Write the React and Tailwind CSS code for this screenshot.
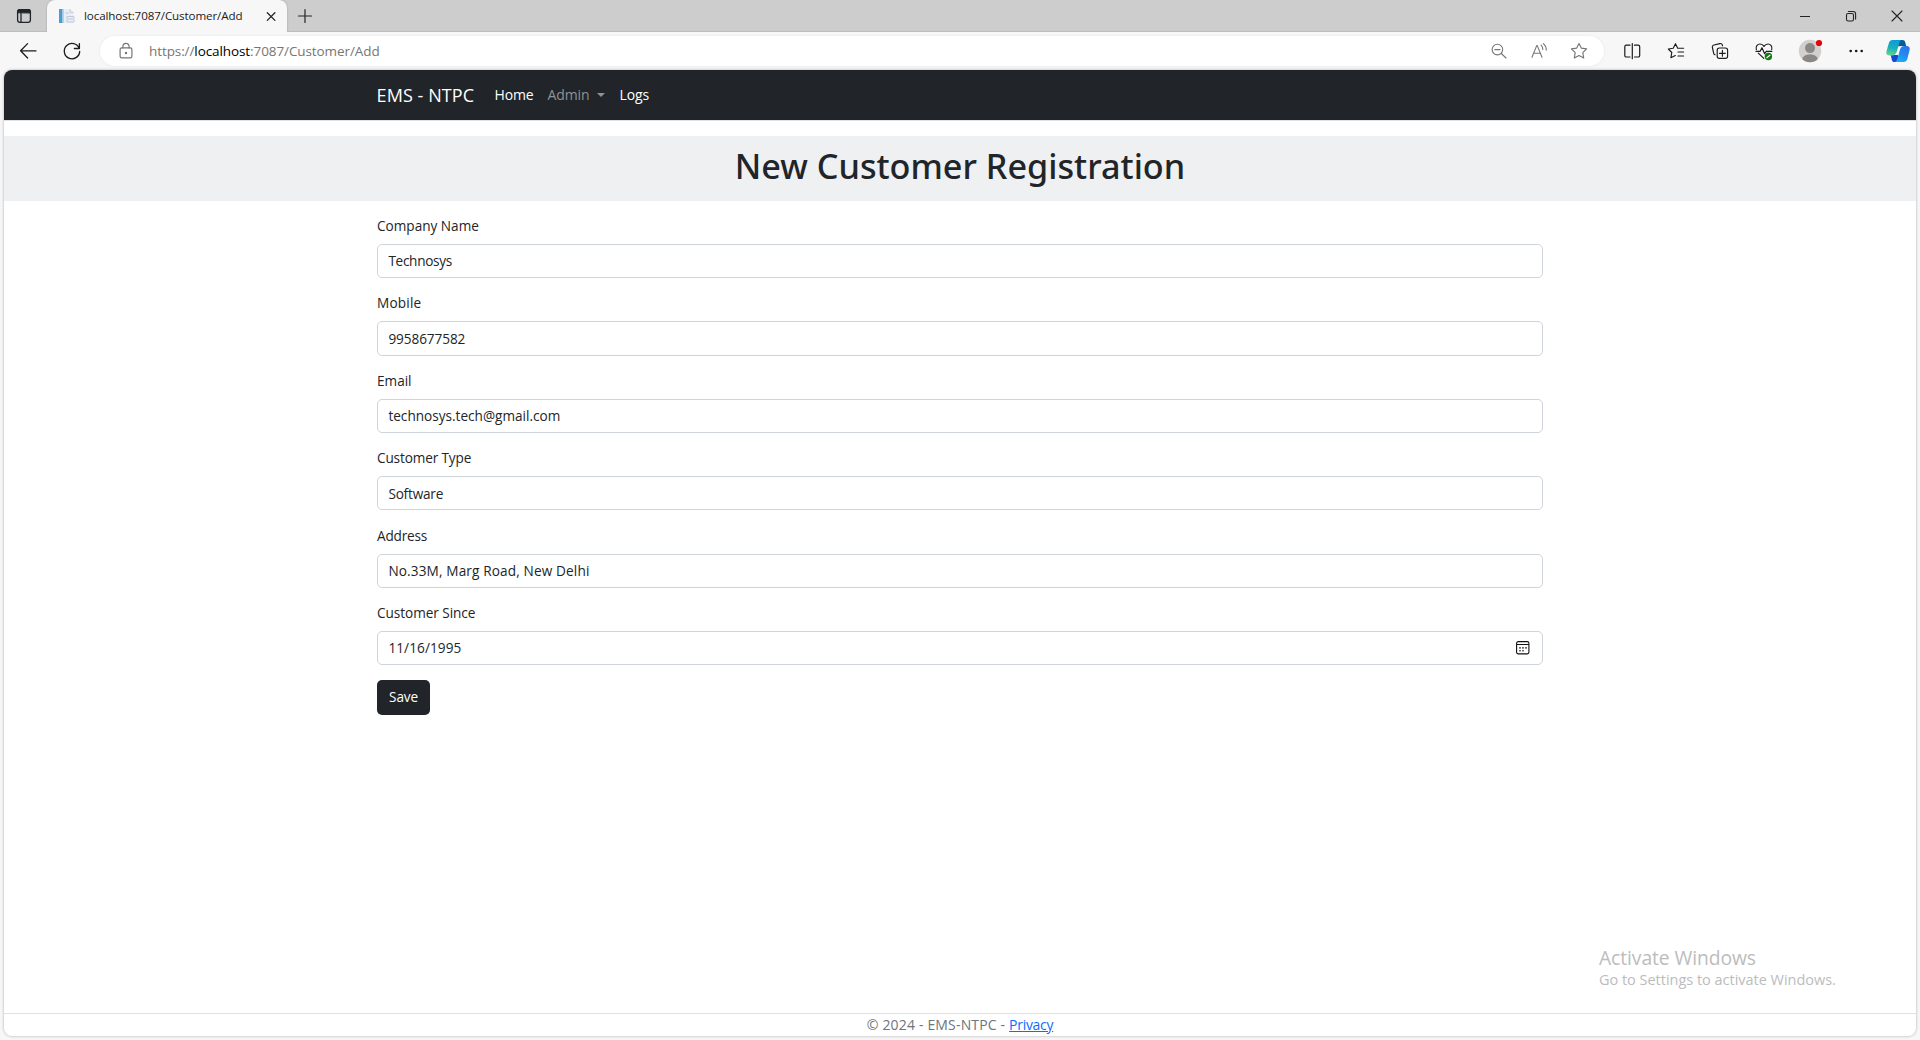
import React from 'react';

function Icon({ children, className = '', width = 1.2, size = 24 }) {
  return (
    <svg
      width={size}
      height={size}
      viewBox="0 0 24 24"
      fill="none"
      stroke="currentColor"
      strokeWidth={width}
      strokeLinecap="round"
      strokeLinejoin="round"
      className={`block shrink-0 ${className}`}
    >
      {children}
    </svg>
  );
}

const STAR = 'M12 4.4 L14.3 9.1 L19.6 9.9 L15.8 13.6 L16.7 19 L12 16.5 L7.3 19 L8.2 13.6 L4.4 9.9 L9.7 9.1 Z';

function TabStrip() {
  return (
    <div className="flex h-8 shrink-0 bg-[#cdcdcd] shadow-[inset_0_-1px_0_#bdbdbd]">
      <div className="flex w-[47px] items-center justify-center pl-[1px]">
        <Icon width={1.3}>
          <rect x="5.6" y="5.6" width="12.8" height="12.8" rx="2.4" />
          <path d="M5.6 8.6V8a2.4 2.4 0 0 1 2.4-2.4h8a2.4 2.4 0 0 1 2.4 2.4v.8z" fill="currentColor" />
          <path d="M9 9v9" />
        </Icon>
      </div>
      <div className="flex w-60 items-center rounded-t-lg bg-[#f7f7f7] shadow-[0_0_2px_rgba(0,0,0,0.25)] [clip-path:inset(0_-3px_0_-3px)]">
        <svg width="16" height="16" viewBox="0 0 16 16" className="ml-3 block shrink-0">
          <rect x="0" y="1" width="3.6" height="14" fill="#4f9bd0" />
          <rect x="3.6" y="1" width="1.4" height="14" fill="#b5d4ea" />
          <path d="M5 1h6.5l3 3v11H5z" fill="#e9edf5" />
          <path d="M11 1v3.4h3.6M6.5 5h3.5M8 8.5h7M8 8.5V14h7V8.5M9 11h5" fill="none" stroke="#bcc5d6" strokeWidth="0.9" />
        </svg>
        <span className="ml-[9px] text-[11.6px] leading-4 tracking-[-0.1px] whitespace-nowrap text-[#1b1b1b]">localhost:7087/Customer/Add</span>
        <Icon className="mr-1 ml-auto" width={1.3}>
          <path d="M8.3 8.8l7.600 7.600M15.900 8.800l-7.600 7.600" />
        </Icon>
      </div>
      <div className="flex w-[35px] items-center justify-center">
        <Icon width={1.2}>
          <path d="M12 5.500v13M5.500 12h13" />
        </Icon>
      </div>
      <div className="ml-auto flex items-center">
        <div className="flex w-[46px] justify-center">
          <Icon><path d="M7 12.5h10" strokeLinecap="butt" strokeWidth="1" /></Icon>
        </div>
        <div className="flex w-[46px] justify-center">
          <Icon width={1.1}>
            <rect x="7.5" y="9.5" width="7" height="7.5" rx="1.6" />
            <path d="M9.4 7.5h4.8a2.4 2.4 0 0 1 2.4 2.4v5.2" />
          </Icon>
        </div>
        <div className="flex w-[46px] justify-center">
          <Icon width={1.1}><path d="M7 7l10 10M17 7L7 17" /></Icon>
        </div>
      </div>
    </div>
  );
}

function CopilotLogo() {
  return (
    <svg width="24" height="24" viewBox="0 0 24 24" className="ml-2 block shrink-0">
      <defs>
        <linearGradient id="copilotLeft" x1="0.5" y1="0" x2="0.3" y2="1">
          <stop offset="0" stopColor="#0c9bd8" />
          <stop offset="0.5" stopColor="#18aebd" />
          <stop offset="1" stopColor="#62d88b" />
        </linearGradient>
        <linearGradient id="copilotRight" x1="0.8" y1="0" x2="0.3" y2="1">
          <stop offset="0" stopColor="#2a74e8" />
          <stop offset="0.5" stopColor="#2389ee" />
          <stop offset="1" stopColor="#16b4f4" />
        </linearGradient>
      </defs>
      <path d="M12 1h4.500c1.500 0 2.300.9 2.700 2.300l1 3.700h-4L12 7.200z" fill="#0a5a94" />
      <path d="M12 23H8.500c-1.500 0-2.200-.8-2.600-2.100L4.700 16h4L12 16z" fill="#1647cf" />
      <path d="M6.500 1h9.200c-1.300.3-1.900 1.300-2.400 3l-2.500 8.500c-.9 2.800-2.300 4-4.500 4H3.500C.9 16.500-.1 14.900.4 12.600L2.900 4C3.500 2 4.600 1 6.500 1z" fill="url(#copilotLeft)" />
      <path d="M17.500 23H8.800c1.400-.4 2-1.400 2.500-3l2.500-8.800c.8-2.800 2.200-4.200 4.600-4.200h2.300c2.500 0 3.500 1.700 2.900 4L21.300 20c-.6 2-1.800 3-3.800 3z" fill="url(#copilotRight)" />
    </svg>
  );
}

function Toolbar() {
  return (
    <div className="flex h-[38px] shrink-0 items-center bg-[#f7f7f7] text-[#1b1b1b]">
      <Icon className="ml-4" width={1.25}><path d="M4.6 11.8H20M11.600 4.600l-7 7.200 7 7.200" /></Icon>
      <Icon className="ml-5" width={1.3}>
        <path d="M19.2 9.3A7.7 7.7 0 1 0 19.7 12.4M19.4 4.6v4.9h-5" />
      </Icon>
      <div className="ml-4 flex h-[30px] w-[1504px] items-center rounded-full bg-white text-[#767676] shadow-[0_0_3px_rgba(0,0,0,0.07)]">
        <Icon className="ml-3.5" width={1.2}>
          <rect x="6.1" y="8.9" width="11.8" height="10" rx="1.6" />
          <path d="M8.9 8.9V7.4a3.1 3.1 0 0 1 6.2 0v1.5" />
          <circle cx="12" cy="14" r="0.6" fill="currentColor" />
        </Icon>
        <span className="ml-[11px] text-[13.5px] leading-5 tracking-[-0.09px] whitespace-nowrap">
          https://<span className="text-black">localhost</span>:7087/Customer/Add
        </span>
        <div className="ml-auto flex items-center pr-[5px]">
          <div className="flex w-10 justify-center">
            <Icon width={1.1}>
              <circle cx="10.4" cy="10.6" r="5.3" />
              <path d="M14.3 14.5l4.7 4.5M7.8 10.6H13" />
            </Icon>
          </div>
          <div className="flex w-10 justify-center">
            <Icon width={1.1}>
              <path d="M5 18.3L9.7 6.6h.6L15 18.3M6.7 14.2h6.6M14.1 6.2a6 6 0 0 1 1.700 4.400M16.400 4.600a8.500 8.500 0 0 1 2.900 6.500" />
            </Icon>
          </div>
          <div className="flex w-10 justify-center">
            <Icon width={1.15}><path d={STAR} /></Icon>
          </div>
        </div>
      </div>
      <div className="ml-[5.500px] flex w-11 justify-center">
        <Icon width={1.2}>
          <path d="M10 6.2H6.4a1.6 1.6 0 0 0-1.6 1.6v8.6A1.6 1.6 0 0 0 6.4 18H10M14.500 6.200h3.600a1.600 1.600 0 0 1 1.600 1.600v8.600a1.600 1.600 0 0 1-1.600 1.600h-3.600M12.300 4.500v15.200" />
        </Icon>
      </div>
      <div className="ml-[0.500px] flex w-11 justify-center">
        <Icon width={1.15}>
          <path d="M15.5 9.2h-1.8L11.5 4.8 9.2 9.3 4.3 10l3.5 3.5-.9 5.2 4.4-2.2M13.9 9.2h5.7M14 13h5.6M14 17h5.6" />
        </Icon>
      </div>
      <div className="flex w-11 justify-center">
        <Icon width={1.15}>
          <rect x="9.2" y="9" width="10.4" height="10.4" rx="2.2" />
          <path d="M14.4 11.4v5.8M11.5 14.3h5.8M7 15.8a2 2 0 0 1-1.3-1.5L4.4 8.5A2 2 0 0 1 5.9 6l6-1.4A2 2 0 0 1 14.3 6l.2.8" />
        </Icon>
      </div>
      <div className="flex w-11 justify-center">
        <Icon width={1.15}>
          <path d="M4.3 10.6C3.4 7.3 5.5 5 8 5c1.8 0 3.1 1 4 2.4C12.9 6 14.2 5 16 5c2.5 0 4.6 2.3 3.7 5.600" />
          <path d="M4 12.400h4l2-3.700 2.600 6 1.700-2.300h5.600M6.300 14.200l5.500 5.200" />
          <circle cx="16.4" cy="17.5" r="3.7" fill="#107c10" stroke="none" />
          <path d="M14.9 18.600l3-2.400" stroke="#ffffff" strokeWidth="1.2" />
        </Icon>
      </div>
      <div className="ml-0.5 flex w-11 justify-center">
        <svg width="26" height="24" viewBox="0 0 26 24" className="block">
          <defs>
            <clipPath id="avatar"><circle cx="13" cy="12" r="11.2" /></clipPath>
          </defs>
          <circle cx="13" cy="12" r="11.2" fill="#d2d0ce" />
          <g clipPath="url(#avatar)" fill="#8a8886">
            <circle cx="13" cy="9.1" r="5" />
            <ellipse cx="13" cy="20.5" rx="7.8" ry="5.3" />
          </g>
          <circle cx="22" cy="4" r="3.1" fill="#e8000b" />
        </svg>
      </div>
      <div className="ml-0.5 flex w-11 justify-center">
        <Icon>
          <g fill="currentColor" stroke="none">
            <circle cx="6.7" cy="12" r="1.35" />
            <circle cx="12.2" cy="12" r="1.35" />
            <circle cx="17.7" cy="12" r="1.35" />
          </g>
        </Icon>
      </div>
      <CopilotLogo />
    </div>
  );
}

function Navbar() {
  return (
    <nav className="flex h-[51px] shrink-0 items-center border-b border-[#dee2e6] bg-[#212529] pl-[372.6px] text-sm text-white">
      <a className="w-[118px] text-[18px] leading-6 tracking-[0.06px]">EMS - NTPC</a>
      <a className="w-[53px] tracking-[-0.15px]">Home</a>
      <a className="flex w-[72px] items-center tracking-[-0.15px] text-[#909294]">
        Admin
        <span className="ml-2 border-x-4 border-t-4 border-x-transparent border-t-[#909294]" />
      </a>
      <a className="tracking-[-0.1px]">Logs</a>
    </nav>
  );
}

function CalendarIcon() {
  return (
    <svg width="14" height="14" viewBox="0 0 14 14" fill="none" stroke="#111" className="block">
      <rect x="0.6" y="0.6" width="12.3" height="12.3" rx="1.6" strokeWidth="1.1" />
      <path d="M0.6 3.500h12.300" strokeWidth="1" />
      <g fill="#111" stroke="none">
        <circle cx="4" cy="6.9" r="0.8" />
        <circle cx="7" cy="6.9" r="0.8" />
        <circle cx="10" cy="6.9" r="0.8" />
        <circle cx="4" cy="9.8" r="0.8" />
        <circle cx="7" cy="9.8" r="0.8" />
      </g>
    </svg>
  );
}

const FIELDS = [
  { label: 'Company Name', labelClass: '', value: 'Technosys', valueClass: 'tracking-[-0.3px]' },
  { label: 'Mobile', labelClass: 'tracking-[0.2px]', value: '9958677582', valueClass: 'tracking-[-0.08px]' },
  { label: 'Email', labelClass: '', value: 'technosys.tech@gmail.com', valueClass: '' },
  { label: 'Customer Type', labelClass: 'tracking-[-0.14px]', value: 'Software', valueClass: 'tracking-[-0.2px]' },
  { label: 'Address', labelClass: 'tracking-[-0.2px]', value: 'No.33M, Marg Road, New Delhi', valueClass: 'tracking-[0.14px]' },
  { label: 'Customer Since', labelClass: 'tracking-[-0.05px]', value: '11/16/1995', valueClass: 'tracking-[0.09px]', date: true },
];

function Field({ field }) {
  return (
    <div className="pt-[14.4px]">
      <label className={`mb-[7.2px] block text-[13.6px] leading-[21.6px] ${field.labelClass}`}>{field.label}</label>
      <div className="flex h-[34.3px] items-center justify-between rounded-[5px] border border-[#ced4da] bg-white pr-3 pl-[10.4px]">
        <span className={`text-[13.6px] leading-[21.6px] ${field.valueClass}`}>{field.value}</span>
        {field.date && <CalendarIcon />}
      </div>
    </div>
  );
}

export default function App() {
  return (
    <div className="flex h-[1040px] w-[1920px] flex-col overflow-hidden bg-[#f7f7f7] font-['Open_Sans',sans-serif] text-[#212529]">
      <TabStrip />
      <Toolbar />
      <div className="relative mx-1 flex h-[966px] shrink-0 flex-col overflow-hidden rounded-lg bg-white shadow-[0_0_3px_rgba(0,0,0,0.3)]">
        <Navbar />
        <div className="mt-[15px] flex h-[64.6px] shrink-0 justify-center bg-[#eff0f2]">
          <h1 className="pt-[8px] font-['Noto_Sans',sans-serif] text-[34.2px] leading-[43px] font-medium">New Customer Registration</h1>
        </div>
        <main className="mx-auto w-[1166px] grow">
          {FIELDS.map((field) => (
            <Field key={field.label} field={field} />
          ))}
          <button className="mt-[14.4px] block h-[35px] w-[53px] rounded-[5px] bg-[#212529] pb-px text-[13.6px] tracking-[-0.17px] text-white">Save</button>
        </main>
        <footer className="flex h-[23px] shrink-0 items-center justify-center border-t border-[#dee2e6] pb-px text-sm text-[#6c757d]">
          <span className="tracking-[0.17px] whitespace-pre">© 2024 - EMS-NTPC - </span>
          <a className="tracking-[-0.3px] text-[#0d6efd] underline">Privacy</a>
        </footer>
        <div className="absolute top-[875.500px] left-[1595px] whitespace-nowrap text-[#bcbcbc]">
          <div className="text-[19.3px] leading-6 tracking-[-0.08px]">Activate Windows</div>
          <div className="text-[14.5px] leading-5 tracking-[-0.02px]">Go to Settings to activate Windows.</div>
        </div>
      </div>
    </div>
  );
}
